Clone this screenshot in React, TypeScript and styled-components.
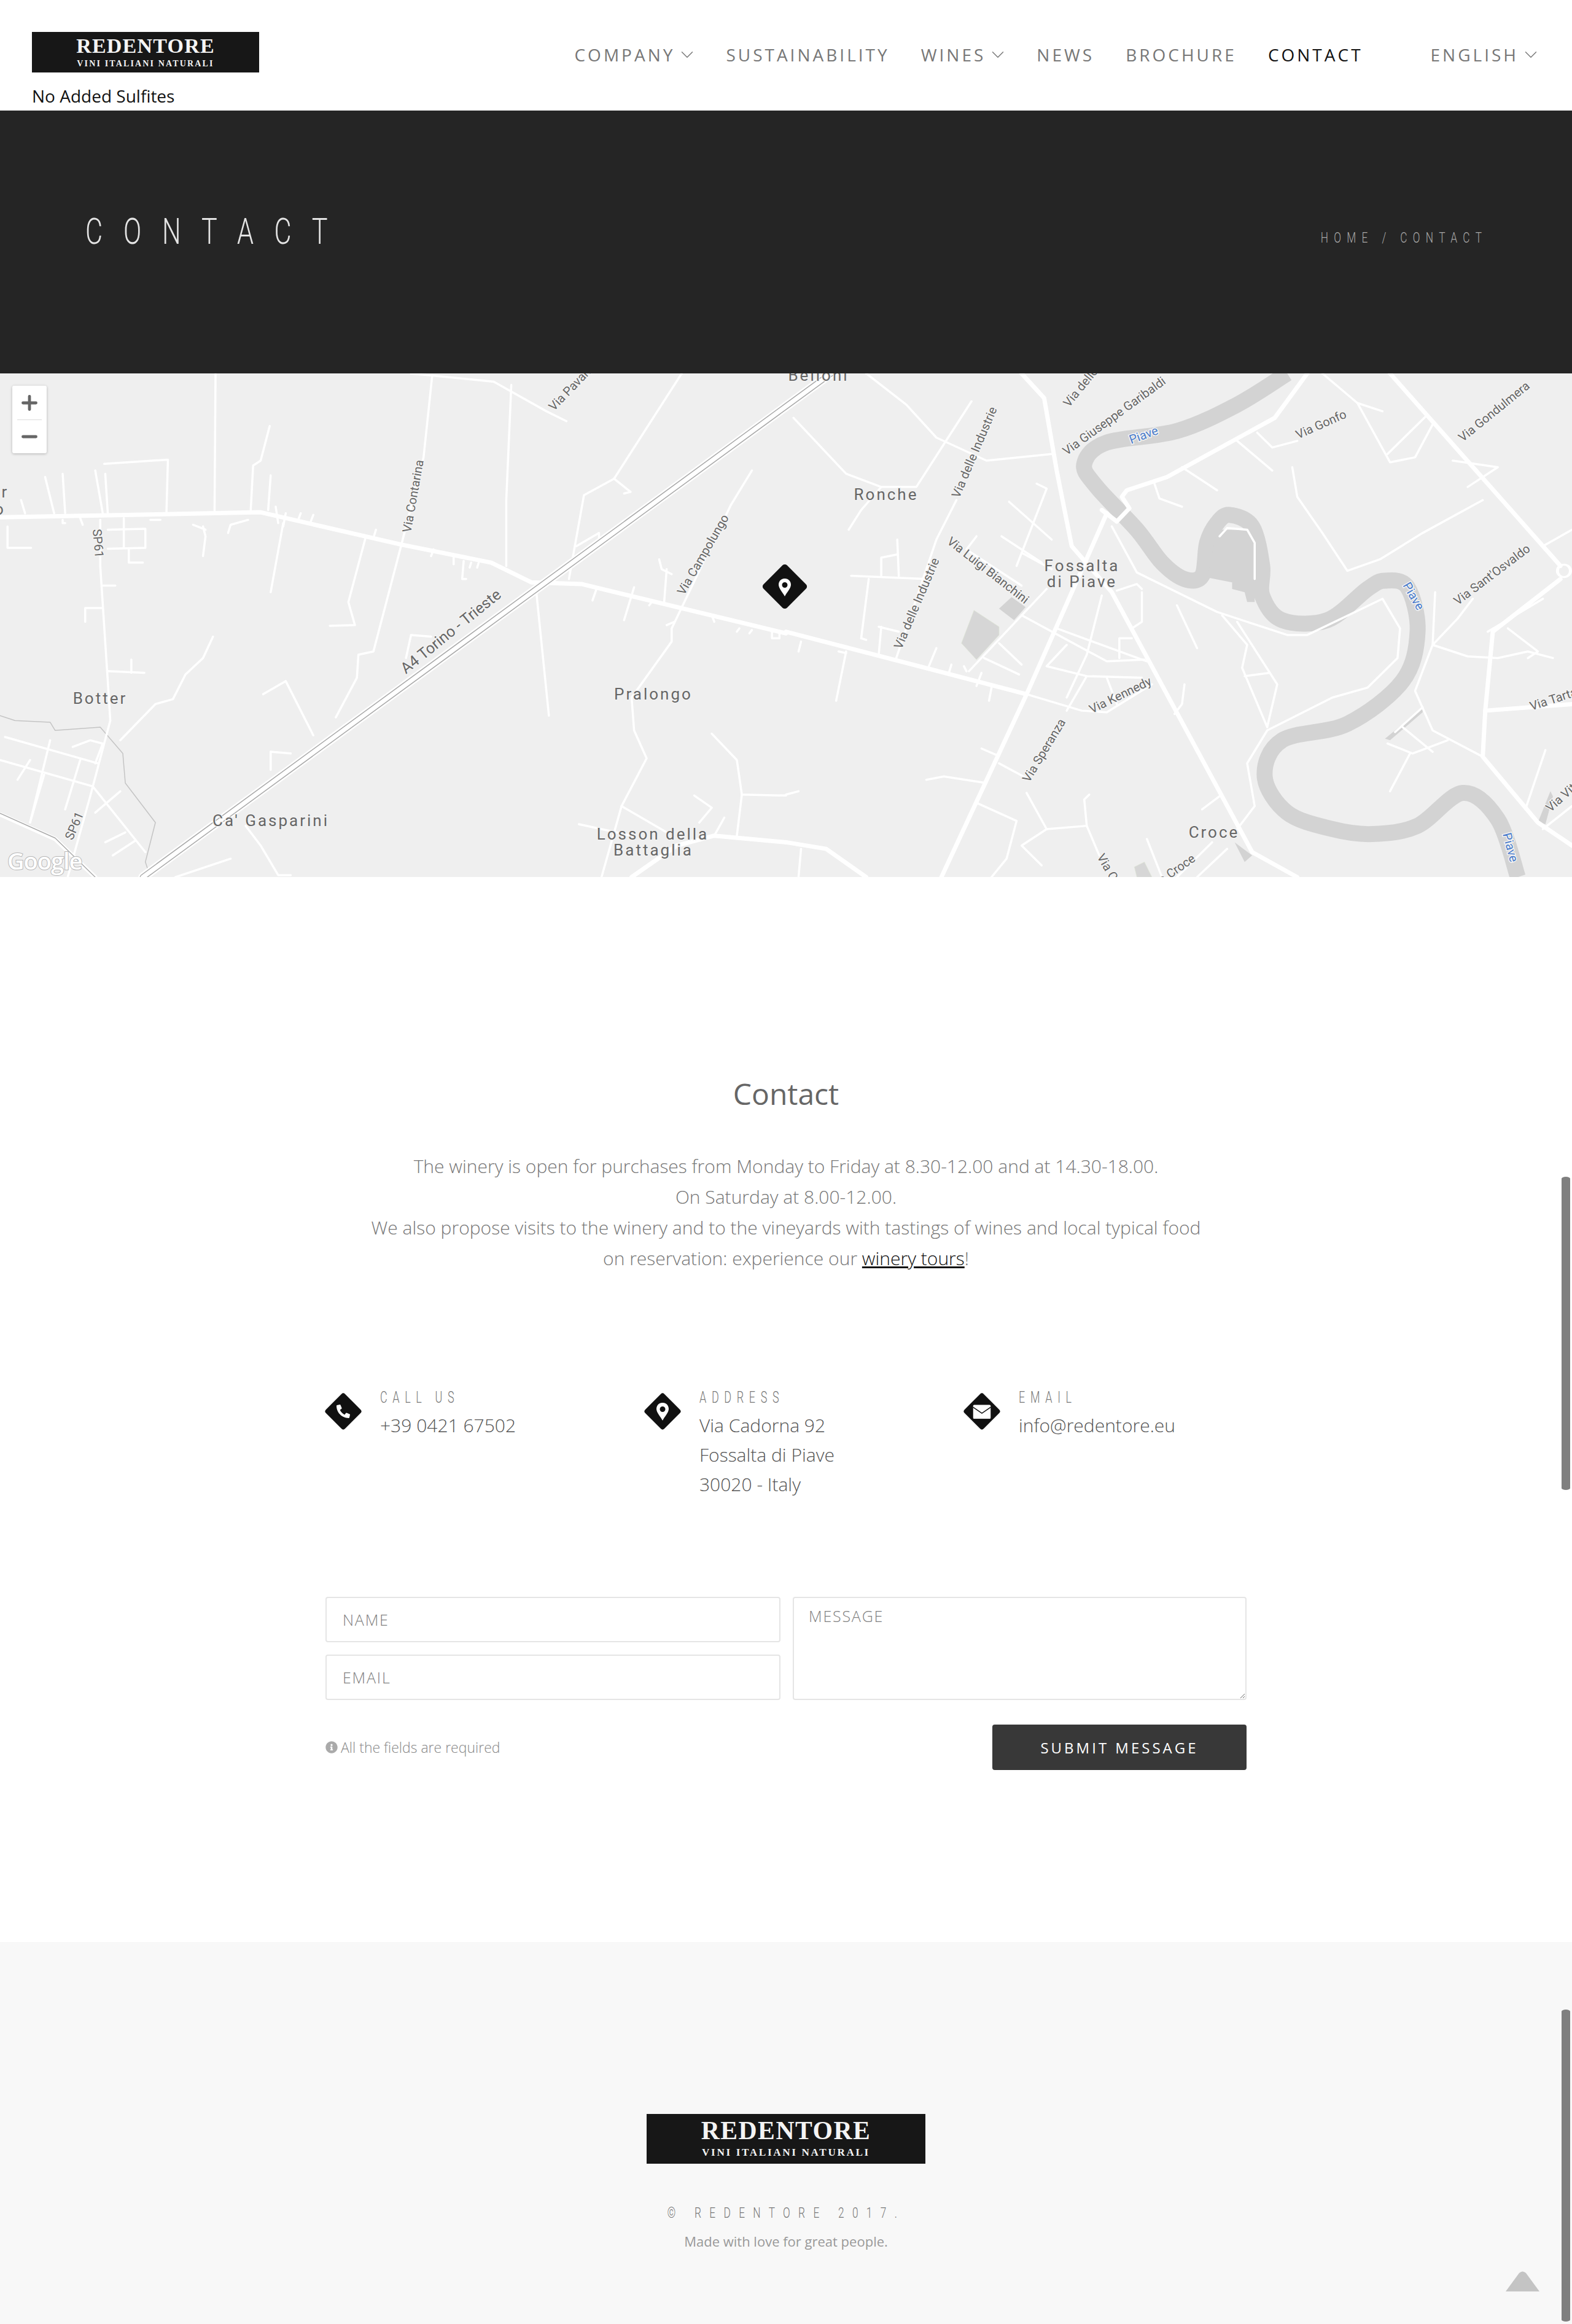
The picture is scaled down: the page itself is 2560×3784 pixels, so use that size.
import React from "react";
import styled, { createGlobalStyle } from "styled-components";
import { ChevronDown, Minus, Plus } from "lucide-react";
import { FaInfoCircle, FaPhoneAlt } from "react-icons/fa";

const GlobalStyle = createGlobalStyle`
	* { box-sizing: border-box; }
	body {
		margin: 0;
		background: #fff;
		font-family: "Open Sans", "Liberation Sans", sans-serif;
	}
`;

// the site's narrow display face is not installed, so Roboto Light gets squeezed
const narrowText = (origin: string) => `
	font-family: Roboto, "Liberation Sans", sans-serif;
	font-weight: 300;
	white-space: nowrap;
	transform: scaleX(0.72);
	transform-origin: ${origin};
`;

const Page = styled.div`
	position: relative;
	width: 2560px;
	height: 3784px;
	overflow: hidden;
`;

/* ---------- header ---------- */

const HeaderBar = styled.header`
	height: 180px;
	padding: 52px 55px 0 52px;
	display: flex;
	justify-content: space-between;
`;

const Brand = styled.div`
	width: 370px;
`;

const LogoBox = styled.div<{ $scale: number }>`
	width: ${(p) => 370 * p.$scale}px;
	height: ${(p) => 66 * p.$scale}px;
	background: #171717;
	color: #f4f4f4;
	font-family: "Liberation Serif", serif;
	font-weight: 700;
	text-align: center;
	padding-top: ${(p) => 6 * p.$scale}px;
	span {
		display: block;
		white-space: nowrap;
	}
	.name {
		font-size: ${(p) => 34 * p.$scale}px;
		line-height: ${(p) => 34 * p.$scale}px;
		letter-spacing: ${(p) => 1.2 * p.$scale}px;
	}
	.sub {
		font-size: ${(p) => 14 * p.$scale}px;
		line-height: ${(p) => 16 * p.$scale}px;
		letter-spacing: ${(p) => 2.15 * p.$scale}px;
		margin-top: ${(p) => 3.5 * p.$scale}px;
	}
`;

const Tagline = styled.p`
	margin: 19px 0 0;
	font-size: 28px;
	line-height: 38px;
	color: #111;
	white-space: nowrap;
`;

const Nav = styled.nav`
	display: flex;
	align-items: center;
	height: 74px;
`;

const NavItem = styled.a<{ $active?: boolean; $push?: boolean }>`
	display: flex;
	align-items: center;
	gap: 3px;
	margin-left: ${(p) => (p.$push ? 110 : 51)}px;
	font-size: 28px;
	letter-spacing: 4px;
	white-space: nowrap;
	color: ${(p) => (p.$active ? "#111" : "#777")};
	svg {
		margin-right: -5px;
	}
`;

/* ---------- hero ---------- */

const Hero = styled.section`
	height: 428px;
	background: #252525;
	padding: 0 138px 0 139px;
	display: flex;
	justify-content: space-between;
`;

const HeroTitle = styled.h1`
	${narrowText("left")}
	margin: 160px 0 0;
	font-size: 60px;
	line-height: 74px;
	letter-spacing: 47px;
	color: #e4e4e4;
`;

const Crumbs = styled.div`
	${narrowText("right")}
	margin-top: 190px;
	font-size: 24px;
	line-height: 34px;
	letter-spacing: 13px;
	color: #aaa;
`;

/* ---------- map ---------- */

const MapFrame = styled.section`
	position: relative;
	height: 820px;
	background: #efefef;
	overflow: hidden;
`;

const MapDrawing = styled.svg`
	display: block;
	polyline,
	path {
		vector-effect: non-scaling-stroke;
	}
`;

const Lines = styled.g<{ $w: number; $c?: string }>`
	fill: none;
	stroke: ${(p) => p.$c || "#fff"};
	stroke-width: ${(p) => p.$w}px;
	stroke-linecap: round;
	stroke-linejoin: round;
`;

const Place = styled.text`
	font-family: Roboto, sans-serif;
	font-size: 26px;
	letter-spacing: 3px;
	fill: #666;
	text-anchor: middle;
	paint-order: stroke;
	stroke: #f2f2f2;
	stroke-width: 3px;
`;

const RoadName = styled.text<{ $water?: boolean; $size?: number }>`
	font-family: Roboto, sans-serif;
	font-size: ${(p) => p.$size || 20}px;
	fill: ${(p) => (p.$water ? "#4a7ccb" : "#666")};
	paint-order: stroke;
	stroke: #f4f4f4;
	stroke-width: 3px;
`;

const GoogleMark = styled.text`
	font-family: "Open Sans", sans-serif;
	font-weight: 600;
	font-size: 38px;
	letter-spacing: -1px;
	fill: #fff;
	paint-order: stroke;
	stroke: #b5b5b5;
	stroke-width: 2px;
`;

const ZoomControl = styled.div`
	position: absolute;
	left: 20px;
	top: 20px;
	width: 56px;
	height: 110px;
	background: #fff;
	border-radius: 3px;
	box-shadow: 0 1px 4px rgba(0, 0, 0, 0.25);
	display: grid;
	grid-template-rows: 1fr 1fr;
`;

const ZoomButton = styled.div<{ $divider?: boolean }>`
	display: flex;
	align-items: center;
	justify-content: center;
	position: relative;
	color: #666;
	&::before {
		content: "";
		display: ${(p) => (p.$divider ? "block" : "none")};
		position: absolute;
		top: 0;
		left: 8px;
		right: 8px;
		height: 1px;
		background: #ddd;
	}
`;

const smooth = (pts: number[][]) => {
	let d = `M${pts[0][0]} ${pts[0][1]}`;
	for (let i = 0; i < pts.length - 1; i++) {
		const p0 = pts[i - 1] || pts[i];
		const p1 = pts[i];
		const p2 = pts[i + 1];
		const p3 = pts[i + 2] || p2;
		d += ` C${p1[0] + (p2[0] - p0[0]) / 6} ${p1[1] + (p2[1] - p0[1]) / 6} ${p2[0] - (p3[0] - p1[0]) / 6} ${p2[1] - (p3[1] - p1[1]) / 6} ${p2[0]} ${p2[1]}`;
	}
	return d;
};

// coordinates below are measured per half of the map, the frames map them to page pixels
const leftFrame = "translate(0 600) scale(.8163 .5357)";
const rightFrame = "translate(1280 600) scale(.8163 .5357)";

const leftThick = [
	"0,452 250,445 520,437 800,535 980,590 1060,650 1160,655 1568,805",
	"1260,1546 1350,1450 1425,1420 1568,1440",
];
const leftThin = [
	"430,15 428,440",
	"820,15 985,40 1090,130 1130,160",
	"862,25 845,270 800,540 745,860 715,870 712,940 670,1060",
	"1020,50 1010,400 1010,600",
	"1360,15 1225,335 1165,385 1135,640",
	"1225,335 1258,375 1245,380",
	"538,175 520,280 505,295 500,435",
	"208,290 335,277 332,440",
	"190,310 205,440",
	"210,320 215,440",
	"125,320 130,440",
	"90,330 108,440",
	"42,400 50,440",
	"540,325 535,430",
	"200,460 200,600 215,950 220,1070 180,1300 135,1546",
	"215,490 290,487 290,545 215,548",
	"247,455 247,545",
	"257,548 257,590 285,590",
	"565,470 540,680",
	"730,510 695,710 708,780 658,782",
	"425,815 405,880 370,930 345,1005 310,1020 240,1130",
	"215,920 288,925",
	"262,885 262,925",
	"170,770 170,728 205,728",
	"205,660 230,660",
	"525,990 570,950 625,1115",
	"1070,680 1095,1055",
	"1500,310 1458,415 1340,790 1340,830 1260,1000 1265,1100 1290,1185 1240,1330 1200,1546",
	"1420,1110 1470,1190 1480,1295 1568,1298",
	"1480,1295 1470,1420",
	"1155,1385 1260,1420",
	"1240,1330 1330,1410",
	"1445,1365 1425,1420",
	"1385,1298 1420,1335 1395,1380",
	"10,1120 195,1200",
	"0,1190 185,1270 290,1470",
	"100,1130 60,1380",
	"60,1190 35,1250",
	"88,1235 60,1380",
	"160,1190 130,1340",
	"145,1150 180,1130 205,1140 190,1200",
	"240,1285 190,1350",
	"250,1410 210,1440",
	"270,1435 225,1480",
	"540,1165 580,1170",
	"540,1165 540,1220",
	"460,1490 350,1546",
	"490,1390 520,1450 555,1540 580,1540",
	"15,480 15,545 62,545",
	"1150,540 1195,500 1195,520",
	"810,880 820,810 860,815",
	"570,440 565,480",
	"600,440 595,460",
	"625,445 620,465",
	"750,490 745,515",
	"865,550 860,570",
	"905,575 905,595",
	"925,585 922,640 930,640",
	"940,590 937,605",
	"955,590 952,605",
	"1190,670 1182,705",
	"1265,665 1245,765",
	"1300,710 1295,720",
	"1330,610 1325,710",
	"1315,580 1320,610 1340,625",
	"1345,770 1330,780",
	"1420,750 1425,770",
	"1475,790 1470,800",
	"1500,795 1495,805",
	"1540,800 1540,820 1555,820 1555,805",
	"160,455 165,475",
	"300,460 320,460",
	"405,480 410,510 405,570",
	"385,475 410,490",
	"455,500 460,475 495,460",
	"125,460 125,470 130,470",
	"550,420 555,470",
];
const rightThick = [
	"470,15 515,90 540,310 570,540 650,680 930,1470 1020,1546",
	"640,440 480,990 310,1546",
	"1040,15 975,150 760,330 680,370 670,390 685,425 660,465 630,430",
	"1205,15 1545,600",
	"1545,640 1410,800 1395,1040 1390,1180 1500,1380 1568,1450",
	"1395,1040 1568,1020",
	"0,800 480,990",
	"0,1440 80,1460 160,1546",
];
const rightThin = [
	"650,480 700,620 860,740 1000,810 1040,810 1190,700 1225,790 1220,880 1160,970 1090,1000 960,1100 920,1200 935,1330 900,1400",
	"15,150 120,320 190,360 260,360 370,100",
	"160,15 240,110 300,210 400,280 530,260",
	"340,400 300,520 220,880",
	"130,630 280,640",
	"165,640 150,820",
	"222,520 225,630",
	"190,630 190,575 222,565",
	"190,360 150,430 125,490",
	"445,405 530,520",
	"500,350 520,365 460,600",
	"430,510 510,590",
	"470,560 530,610",
	"380,510 360,550 470,660",
	"520,670 365,920",
	"470,750 640,890 715,885",
	"540,790 720,890",
	"425,835 470,900",
	"395,880 465,930",
	"630,690 600,870 560,1000",
	"560,840 520,905 600,935 710,940",
	"600,935 560,1040",
	"640,940 660,1020",
	"690,820 665,820 665,880",
	"710,680 710,770 690,790",
	"660,675 700,655 710,670",
	"780,720 820,850",
	"870,750 920,840 910,910 960,1090",
	"900,770 980,960 960,1090",
	"915,935 965,925",
	"795,960 790,1020 775,1050",
	"1010,300 1020,390 1070,500 1120,615 1185,580 1270,500 1390,400",
	"1370,700 1340,760 1290,840",
	"1290,840 1360,875 1420,880 1480,860 1530,880",
	"1295,680 1290,840 1255,980 1290,1100 1390,1180",
	"1200,1140 1250,1170 1320,1130",
	"1215,1105 1270,1030",
	"1230,1090 1290,1165",
	"1245,1170 1205,1285",
	"900,220 970,310",
	"940,195 970,240 1020,220",
	"1070,15 1140,105 1205,285 1255,270 1290,170",
	"1140,105 1190,130",
	"1280,140 1200,260",
	"1330,280 1420,300 1360,360",
	"1510,540 1568,490",
	"1400,800 1510,700",
	"1440,790 1500,860 1480,880",
	"1515,1160 1475,1340",
	"830,1340 865,1300",
	"400,1260 315,1240 280,1250",
	"390,1155 420,1175",
	"425,1200 480,1245",
	"380,1320 460,1375 440,1490 410,1546",
	"480,1290 520,1400 600,1390 595,1310 605,1295",
	"600,1390 625,1480",
	"520,1400 470,1450 510,1510",
	"30,1460 25,1546",
	"0,1295 25,1285",
	"120,860 100,1010",
	"30,830 25,860",
	"480,990 590,1040 640,1045 730,960",
	"735,350 745,395 790,420",
	"790,300 860,370",
	"720,1430 750,1546",
	"880,1460 820,1546",
	"850,1440 780,1546",
	"1510,1400 1568,1330",
	"105,860 120,865",
	"190,785 185,870",
	"300,850 285,905",
	"330,900 325,925",
	"355,905 360,920",
	"390,925 380,965",
	"410,970 405,1010",
	"150,820 160,825",
	"185,785 225,800",
	"865,510 880,485 920,490 935,530 935,640",
];
const riverPoints = [
	[1000, 15], [900, 110], [780, 190], [640, 225], [595, 290], [620, 360], [700, 490], [750, 590], [795, 640],
	[830, 630], [840, 530], [860, 470], [885, 445], [930, 480], [950, 600], [950, 690], [990, 765], [1080, 765],
	[1160, 670], [1195, 645], [1240, 665], [1260, 800], [1230, 950], [1120, 1080], [990, 1130], [955, 1240],
	[1000, 1350], [1090, 1400], [1170, 1415], [1260, 1390], [1350, 1290], [1420, 1370], [1460, 1546],
];
const patches = [
	"860,490 935,490 935,710 920,710 915,680 890,670 890,650 840,635",
	"425,730 450,695 478,725 455,765",
	"895,1440 930,1480 915,1500",
	"1500,1380 1525,1285 1530,1300 1515,1385",
	"1195,1125 1270,1030 1270,1045 1205,1130",
];
const greenPatches = [
	"375,735 425,785 425,810 380,885 350,835",
	"695,1515 715,1500 730,1546 700,1546",
];

const MOTORWAY = "285,1546 1568,115 1700,-32";

const roadNames: [string, number, number, number, number?][] = [
	["Via Contarina", 669, 868, -80],
	["Via Pavan", 902, 670, -46],
	["A4 Torino - Trieste", 661, 1098, -39, 25],
	["Via Campolungo", 1114, 970, -60],
	["SP61", 151, 862, 85],
	["SP61", 118, 1369, -67],
	["Via delle Industrie", 1741, 664, -51],
	["Via Giuseppe Garibaldi", 1737, 742, -36],
	["Via Gonfo", 2114, 715, -24],
	["Via Gondulmera", 2382, 720, -39],
	["Via delle Industrie", 1562, 812, -67],
	["Via delle Industrie", 1468, 1058, -67],
	["Via Luigi Bianchini", 1541, 884, 38],
	["Via Sant'Osvaldo", 2374, 986, -37],
	["Via Kennedy", 1778, 1162, -26],
	["Via Speranza", 1676, 1275, -59],
	["Via Tartaro", 2494, 1157, -18],
	["Via Vittoria", 2525, 1323, -42],
	["Via Croce", 1786, 1395, 60],
	["Via Croce", 1878, 1450, -35],
];

const rivers: [number, number, number][] = [
	[1842, 723, -20],
	[2284, 953, 60],
	[2447, 1358, 75],
];

const places: [string, number, number][] = [
	["Belloni", 1333, 620],
	["Ronche", 1443, 814],
	["Fossalta", 1762, 930],
	["di Piave", 1762, 956],
	["Botter", 163, 1146],
	["Pralongo", 1064, 1139],
	["Ca' Gasparini", 441, 1345],
	["Losson della", 1063, 1367],
	["Battaglia", 1064, 1393],
	["Croce", 1977, 1364],
];

const PIN = "M0 -13c-6 0 -10 4.500 -10 10c0 6 7 13 10 19c3 -6 10 -13 10 -19c0 -5.500 -4 -10 -10 -10zm0 6a4.500 4.500 0 1 1 0 9a4.500 4.500 0 0 1 0 -9z";

const MapView = () => (
	<MapFrame>
		<MapDrawing width="2560" height="820" viewBox="0 608 2560 820">
			<g transform={rightFrame}>
				<path d={smooth(riverPoints)} fill="none" stroke="#d3d3d3" strokeWidth="26" />
				{patches.map((p) => (
					<polygon key={p} points={p} fill="#d3d3d3" />
				))}
				{greenPatches.map((p) => (
					<polygon key={p} points={p} fill="#d6d6d6" stroke="#dfe8d6" />
				))}
			</g>
			<g transform={leftFrame}>
				<Lines $w={1.5} $c="#c4c4c4">
					<polyline points="0,1055 30,1070 100,1075 110,1100 200,1090 245,1170 250,1260 310,1380 290,1500 300,1546" />
				</Lines>
				<Lines $w={3.500}>
					{leftThin.map((p) => (
						<polyline key={p} points={p} />
					))}
				</Lines>
				<Lines $w={7}>
					{leftThick.map((p) => (
						<polyline key={p} points={p} />
					))}
				</Lines>
				<Lines $w={7}>
					<polyline points="0,1355 110,1430 190,1546" />
				</Lines>
				<Lines $w={1.5} $c="#aaa">
					<polyline points="0,1352 110,1427 190,1546" />
				</Lines>
				<Lines $w={15}>
					<polyline points={MOTORWAY} />
				</Lines>
				<Lines $w={10} $c="#a8a8a8">
					<polyline points={MOTORWAY} />
				</Lines>
				<Lines $w={7}>
					<polyline points={MOTORWAY} />
				</Lines>
			</g>
			<g transform={rightFrame}>
				<Lines $w={3.500}>
					{rightThin.map((p) => (
						<polyline key={p} points={p} />
					))}
				</Lines>
				<Lines $w={7}>
					{rightThick.map((p) => (
						<polyline key={p} points={p} />
					))}
				</Lines>
				<Lines $w={6}>
					<ellipse cx="1552" cy="615" rx="13" ry="19" />
				</Lines>
			</g>
			{roadNames.map(([name, x, y, angle, size]) => (
				<RoadName key={`${name}${x}`} $size={size} x={x} y={y} transform={`rotate(${angle} ${x} ${y})`}>
					{name}
				</RoadName>
			))}
			{rivers.map(([x, y, angle]) => (
				<RoadName key={x} $water x={x} y={y} transform={`rotate(${angle} ${x} ${y})`}>
					Piave
				</RoadName>
			))}
			{places.map(([name, x, y]) => (
				<Place key={name} x={x} y={y}>
					{name}
				</Place>
			))}
			<Place x={0} y={810}>
				er
			</Place>
			<Place x={0} y={838}>
				o
			</Place>
			<GoogleMark x={12} y={1416}>
				Google
			</GoogleMark>
			<g transform="translate(1278 955)">
				<rect x="-27" y="-27" width="54" height="54" rx="5" fill="#111" transform="rotate(45)" />
				<path d={PIN} fill="#fff" fillRule="evenodd" />
			</g>
		</MapDrawing>
		<ZoomControl>
			<ZoomButton>
				<Plus size={36} strokeWidth={3.2} />
			</ZoomButton>
			<ZoomButton $divider>
				<Minus size={36} strokeWidth={3.2} />
			</ZoomButton>
		</ZoomControl>
	</MapFrame>
);

/* ---------- contact ---------- */

const ContactSection = styled.section`
	height: 1734px;
	padding-top: 323px;
`;

const Heading = styled.h2`
	margin: 0;
	text-align: center;
	font-weight: 400;
	font-size: 48px;
	line-height: 60px;
	color: #666;
`;

const Intro = styled.p`
	margin: 63px 0 0;
	text-align: center;
	font-weight: 300;
	font-size: 30px;
	line-height: 50px;
	color: #777;
	a {
		color: #111;
		text-decoration: underline;
	}
`;

const InfoGrid = styled.div`
	margin: 184px 0 0 537px;
	display: grid;
	grid-template-columns: repeat(3, 520px);
	height: 342px;
`;

const InfoItem = styled.div`
	display: flex;
	align-items: flex-start;
	gap: 38px;
`;

const Diamond = styled.div`
	width: 44px;
	height: 44px;
	margin-top: 18px;
	background: #111;
	border-radius: 4px;
	transform: rotate(45deg);
	display: flex;
	align-items: center;
	justify-content: center;
	color: #fff;
	flex: none;
	svg {
		transform: rotate(-45deg);
		display: block;
	}
`;

const InfoLabel = styled.div`
	${narrowText("left")}
	font-size: 25px;
	line-height: 35px;
	letter-spacing: 12px;
	color: #777;
	margin-bottom: 4px;
`;

const InfoValue = styled.div`
	font-weight: 300;
	font-size: 30px;
	line-height: 48px;
	color: #555;
`;

const ContactForm = styled.form`
	margin-left: 530px;
	width: 1500px;
	display: grid;
	grid-template-columns: 741px 739px;
	column-gap: 20px;
	row-gap: 20px;
`;

const fieldStyle = `
	border: 2px solid #e5e5e5;
	border-radius: 4px;
	background: #fff;
	font-family: "Open Sans", sans-serif;
	font-weight: 300;
	font-size: 25px;
	letter-spacing: 1.8px;
	color: #555;
	outline: none;
	&::placeholder {
		color: #808080;
		opacity: 1;
	}
`;

const TextField = styled.input`
	${fieldStyle}
	height: 74px;
	width: 100%;
	padding: 0 26px;
`;

const MessageField = styled.textarea`
	${fieldStyle}
	grid-column: 2;
	grid-row: 1 / span 2;
	width: 100%;
	height: 168px;
	padding: 12px 24px;
	line-height: 34px;
`;

const FormFooter = styled.div`
	grid-column: 1 / span 2;
	margin-top: 20px;
	display: flex;
	align-items: center;
	justify-content: space-between;
`;

const RequiredNote = styled.div`
	display: flex;
	align-items: center;
	gap: 5px;
	font-weight: 300;
	font-size: 23px;
	color: #888;
	svg {
		color: #aaa;
	}
`;

const SubmitButton = styled.button`
	width: 414px;
	height: 74px;
	border: 0;
	border-radius: 4px;
	background: #383838;
	color: #fff;
	font-family: "Open Sans", sans-serif;
	font-size: 24px;
	letter-spacing: 4px;
`;

/* ---------- footer ---------- */

const Footer = styled.footer`
	height: 622px;
	background: #f8f8f8;
	padding-top: 280px;
	display: flex;
	flex-direction: column;
	align-items: center;
`;

const Copyright = styled.div`
	${narrowText("center")}
	margin-top: 64px;
	font-size: 24px;
	line-height: 32px;
	letter-spacing: 18.5px;
	color: #777;
`;

const Credit = styled.div`
	margin-top: 14px;
	font-size: 22px;
	line-height: 32px;
	color: #999;
`;

/* ---------- overlays ---------- */

const ScrollThumb = styled.div<{ $top: number; $height: number }>`
	position: absolute;
	right: 3px;
	top: ${(p) => p.$top}px;
	width: 14px;
	height: ${(p) => p.$height}px;
	border-radius: 7px / 3px;
	background: #7f7f7f;
`;

const BackToTop = styled.svg`
	position: absolute;
	left: 2452px;
	top: 3698px;
`;

const Logo = ({ scale }: { scale: number }) => (
	<LogoBox $scale={scale}>
		<span className="name">REDENTORE</span>
		<span className="sub">VINI ITALIANI NATURALI</span>
	</LogoBox>
);

const NAV = [
	{ label: "COMPANY", caret: true },
	{ label: "SUSTAINABILITY" },
	{ label: "WINES", caret: true },
	{ label: "NEWS" },
	{ label: "BROCHURE" },
	{ label: "CONTACT", active: true },
	{ label: "ENGLISH", caret: true, push: true },
];

const App = () => (
	<Page>
		<GlobalStyle />
		<HeaderBar>
			<Brand>
				<Logo scale={1} />
				<Tagline>No Added Sulfites</Tagline>
			</Brand>
			<Nav>
				{NAV.map((item) => (
					<NavItem key={item.label} $active={item.active} $push={item.push}>
						{item.label}
						{item.caret && <ChevronDown size={34} strokeWidth={1} />}
					</NavItem>
				))}
			</Nav>
		</HeaderBar>
		<Hero>
			<HeroTitle>CONTACT</HeroTitle>
			<Crumbs>HOME / CONTACT</Crumbs>
		</Hero>
		<MapView />
		<ContactSection>
			<Heading>Contact</Heading>
			<Intro>
				The winery is open for purchases from Monday to Friday at 8.30-12.00 and at 14.30-18.00.
				<br />
				On Saturday at 8.00-12.00.
				<br />
				We also propose visits to the winery and to the vineyards with tastings of wines and local typical food
				<br />
				on reservation: experience our <a>winery tours</a>!
			</Intro>
			<InfoGrid>
				<InfoItem>
					<Diamond>
						<FaPhoneAlt size={22} />
					</Diamond>
					<div>
						<InfoLabel>CALL US</InfoLabel>
						<InfoValue>+39 0421 67502</InfoValue>
					</div>
				</InfoItem>
				<InfoItem>
					<Diamond>
						<svg width="24" height="32" viewBox="-12 -15 24 32">
							<path d={PIN} fill="#fff" fillRule="evenodd" />
						</svg>
					</Diamond>
					<div>
						<InfoLabel>ADDRESS</InfoLabel>
						<InfoValue>
							Via Cadorna 92
							<br />
							Fossalta di Piave
							<br />
							30020 - Italy
						</InfoValue>
					</div>
				</InfoItem>
				<InfoItem>
					<Diamond>
						<svg width="29" height="23" viewBox="0 0 29 23">
							<rect width="29" height="23" rx="2.500" fill="#fff" />
							<polyline points="0,4 14.500,14 29,4" fill="none" stroke="#111" strokeWidth="1.500" />
						</svg>
					</Diamond>
					<div>
						<InfoLabel>EMAIL</InfoLabel>
						<InfoValue>info@redentore.eu</InfoValue>
					</div>
				</InfoItem>
			</InfoGrid>
			<ContactForm>
				<TextField placeholder="NAME" />
				<MessageField placeholder="MESSAGE" />
				<TextField placeholder="EMAIL" />
				<FormFooter>
					<RequiredNote>
						<FaInfoCircle size={20} />
						All the fields are required
					</RequiredNote>
					<SubmitButton type="button">SUBMIT MESSAGE</SubmitButton>
				</FormFooter>
			</ContactForm>
		</ContactSection>
		<Footer>
			<Logo scale={1.227} />
			<Copyright>© REDENTORE 2017.</Copyright>
			<Credit>Made with love for great people.</Credit>
		</Footer>
		<ScrollThumb $top={1916} $height={510} />
		<ScrollThumb $top={3272} $height={508} />
		<BackToTop width="55" height="33" viewBox="0 0 55 33">
			<path d="M0 33 L22 3 Q27.500 -2 33 3 L55 33 Z" fill="#c4c4c4" />
		</BackToTop>
	</Page>
);

export default App;
